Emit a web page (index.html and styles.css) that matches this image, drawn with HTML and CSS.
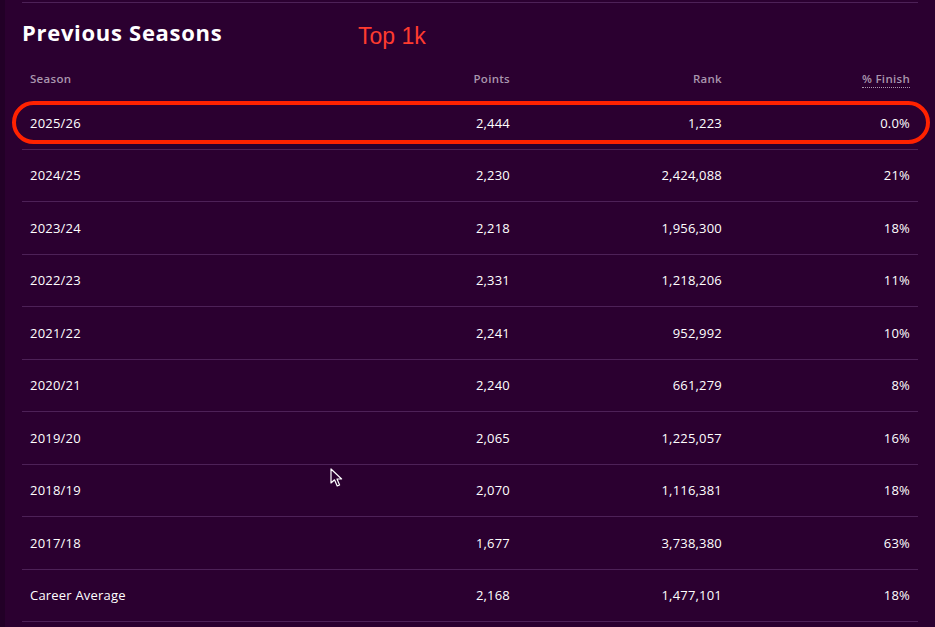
FILE: index.html
```html
<!DOCTYPE html>
<html>
<head>
<meta charset="utf-8">
<link rel="stylesheet" href="styles.css">
</head>
<body>
<div class="page">
  <div class="edge"></div>
  <main class="main">
    <section class="panel">
      <div class="title-row">
        <h2 class="title">Previous Seasons</h2>
        <span class="note">Top 1k</span>
      </div>
      <div class="table">
        <div class="row head">
          <div class="c season">Season</div>
          <div class="c">Points</div>
          <div class="c">Rank</div>
          <div class="c"><span class="dotted">% Finish</span></div>
        </div>
        <div class="row highlight">
          <div class="c season">2025/26</div><div class="c">2,444</div><div class="c">1,223</div><div class="c">0.0%</div>
          <div class="oval"></div>
        </div>
        <div class="row"><div class="c season">2024/25</div><div class="c">2,230</div><div class="c">2,424,088</div><div class="c">21%</div></div>
        <div class="row"><div class="c season">2023/24</div><div class="c">2,218</div><div class="c">1,956,300</div><div class="c">18%</div></div>
        <div class="row"><div class="c season">2022/23</div><div class="c">2,331</div><div class="c">1,218,206</div><div class="c">11%</div></div>
        <div class="row"><div class="c season">2021/22</div><div class="c">2,241</div><div class="c">952,992</div><div class="c">10%</div></div>
        <div class="row"><div class="c season">2020/21</div><div class="c">2,240</div><div class="c">661,279</div><div class="c">8%</div></div>
        <div class="row"><div class="c season">2019/20</div><div class="c">2,065</div><div class="c">1,225,057</div><div class="c">16%</div></div>
        <div class="row"><div class="c season">2018/19</div><div class="c">2,070</div><div class="c">1,116,381</div><div class="c">18%</div></div>
        <div class="row"><div class="c season">2017/18</div><div class="c">1,677</div><div class="c">3,738,380</div><div class="c">63%</div></div>
        <div class="row"><div class="c season">Career Average</div><div class="c">2,168</div><div class="c">1,477,101</div><div class="c">18%</div></div>
      </div>
    </section>
  </main>
</div>
<svg class="cursor" width="14" height="20" viewBox="0 0 14 20">
  <path d="M1 1 L1 15 L4.5 11.8 L7.2 18 L9.6 17 L7 11 L11.6 11 Z" fill="#2b0030" stroke="#ffffff" stroke-width="1.2" stroke-linejoin="round"/>
</svg>
</body>
</html>
```

FILE: styles.css
```css
html, body {
  margin: 0;
  padding: 0;
  background: #2b0030;
  height: 100%;
  overflow: hidden;
}
.page {
  display: flex;
  min-height: 627px;
}
.edge {
  width: 5px;
  background: #220027;
  flex: none;
}
.main {
  flex: 1;
  padding: 0 17px 0 17px;
}
.panel {
  border-top: 1px solid #4d2157;
  margin-top: 2px;
}
.title-row {
  display: flex;
  align-items: center;
  height: 57px;
  position: relative;
}
.title {
  margin: 0;
  font-family: "Open Sans", Lato, sans-serif;
  font-weight: 700;
  font-size: 22px;
  letter-spacing: 0.7px;
  color: #ffffff;
  width: 336px;
}
.note {
  font-family: "Liberation Sans", Arial, sans-serif;
  font-size: 23px;
  color: #ff3b2f;
  margin-top: 10px;
}
.table {
  font-family: "Open Sans", Lato, sans-serif;
  color: #ffffff;
}
.row {
  display: grid;
  grid-template-columns: 284px 212px 212px 188px;
  align-items: center;
  height: 51.5px;
  border-bottom: 1px solid #4d2157;
  font-size: 13px;
  letter-spacing: 0.2px;
  position: relative;
}
.row.head {
  height: 37px;
  border-bottom: none;
  font-size: 11.5px;
  letter-spacing: 0.3px;
  font-weight: 600;
  color: #a996ad;
}
.c {
  text-align: right;
  padding: 0 8px;
}
.c.season {
  text-align: left;
}
.dotted {
  border-bottom: 1px dotted #a996ad;
  padding-bottom: 1px;
}
.oval {
  position: absolute;
  left: -10px;
  right: -12px;
  top: 4px;
  bottom: 5px;
  border: 4px solid #ff2200;
  border-radius: 24px;
  pointer-events: none;
}
.cursor {
  position: absolute;
  left: 330px;
  top: 468px;
}
```
